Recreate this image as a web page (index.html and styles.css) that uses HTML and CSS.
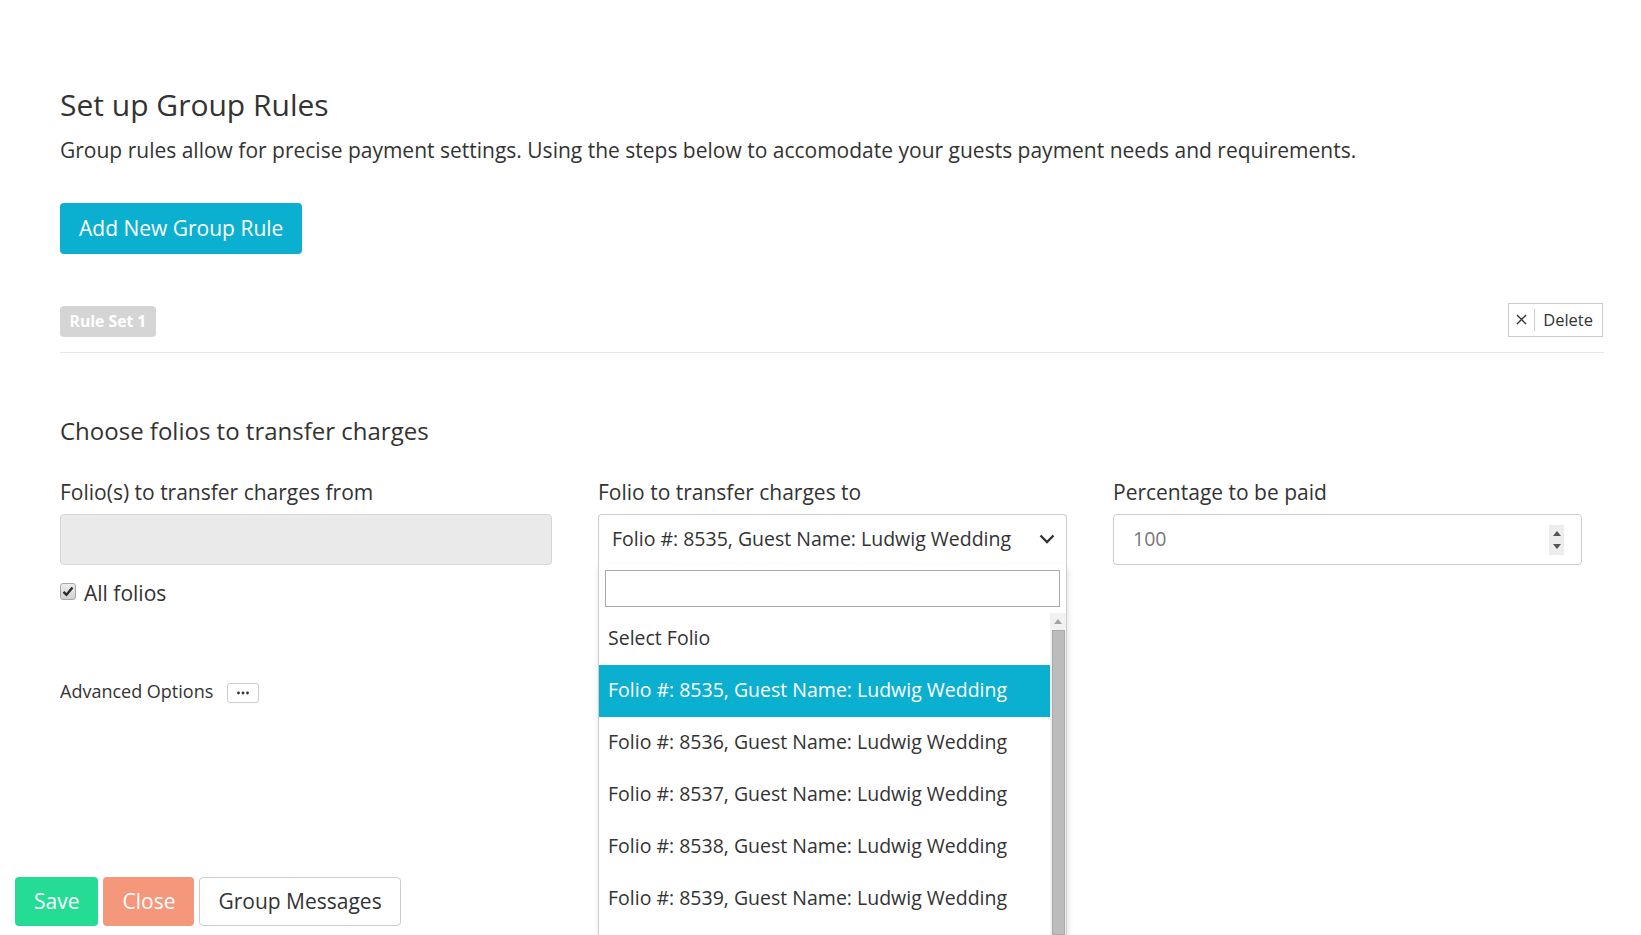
FILE: index.html
```html
<!DOCTYPE html>
<html lang="en">
<head>
<meta charset="utf-8">
<title>Set up Group Rules</title>
<link rel="stylesheet" href="styles.css">
</head>
<body>
<div class="page">
  <main class="content">
    <h1 class="title">Set up Group Rules</h1>
    <p class="intro">Group rules allow for precise payment settings. Using the steps below to accomodate your guests payment needs and requirements.</p>
    <div class="add-row"><button class="btn btn-add">Add New Group Rule</button></div>

    <div class="rule-head">
      <span class="badge">Rule Set 1</span>
      <button class="delete">
        <span class="del-x"><svg width="11" height="11" viewBox="0 0 11 11"><path d="M1 1L10 10M10 1L1 10" stroke="#333" stroke-width="1.4" fill="none"/></svg></span>
        <span class="del-sep"></span>
        <span class="del-label">Delete</span>
      </button>
    </div>

    <h2 class="section">Choose folios to transfer charges</h2>

    <div class="grid">
      <div class="col">
        <label class="label">Folio(s) to transfer charges from</label>
        <div class="field field-disabled"></div>
        <div class="check-row">
          <span class="checkbox"><svg width="12" height="11" viewBox="0 0 12 11"><path d="M1.5 5.8L4.5 8.8L10.5 1.5" stroke="#2b2b2b" stroke-width="2.4" fill="none"/></svg></span>
          <span>All folios</span>
        </div>
        <div class="adv">
          <span>Advanced Options</span>
          <button class="dots"><svg width="14" height="4" viewBox="0 0 14 4"><circle cx="2.5" cy="2" r="1.4" fill="#333"/><circle cx="7" cy="2" r="1.4" fill="#333"/><circle cx="11.5" cy="2" r="1.4" fill="#333"/></svg></button>
        </div>
      </div>

      <div class="col">
        <label class="label">Folio to transfer charges to</label>
        <div class="select-wrap">
          <div class="select">
            <span>Folio #: 8535, Guest Name: Ludwig Wedding</span>
            <svg class="chev" width="16" height="10" viewBox="0 0 16 10"><path d="M1.5 1.5L8 8L14.5 1.5" stroke="#333" stroke-width="2.4" fill="none"/></svg>
          </div>
          <div class="dropdown">
            <div class="search"></div>
            <div class="list">
              <div class="items">
                <div class="item">Select Folio</div>
                <div class="item active">Folio #: 8535, Guest Name: Ludwig Wedding</div>
                <div class="item">Folio #: 8536, Guest Name: Ludwig Wedding</div>
                <div class="item">Folio #: 8537, Guest Name: Ludwig Wedding</div>
                <div class="item">Folio #: 8538, Guest Name: Ludwig Wedding</div>
                <div class="item">Folio #: 8539, Guest Name: Ludwig Wedding</div>
              </div>
              <div class="scrollbar">
                <div class="sb-up"><svg width="8" height="5" viewBox="0 0 8 5"><path d="M0 5L4 0L8 5Z" fill="#a3a3a3"/></svg></div>
                <div class="sb-thumb"></div>
              </div>
            </div>
          </div>
        </div>
      </div>

      <div class="col">
        <label class="label">Percentage to be paid</label>
        <div class="field field-number">
          <span class="num">100</span>
          <span class="spin">
            <svg width="8" height="5" viewBox="0 0 8 5"><path d="M0 5L4 0L8 5Z" fill="#555"/></svg>
            <svg width="8" height="5" viewBox="0 0 8 5"><path d="M0 0L8 0L4 5Z" fill="#555"/></svg>
          </span>
        </div>
      </div>
    </div>
  </main>

  <footer class="actions">
    <button class="btn btn-save">Save</button>
    <button class="btn btn-close">Close</button>
    <button class="btn btn-default">Group Messages</button>
  </footer>
</div>
</body>
</html>
```

FILE: styles.css
```css
html, body {
  margin: 0;
  height: 100%;
  overflow: hidden;
}

body {
  font-family: "Open Sans", "Liberation Sans", sans-serif;
  color: #333;
  background: #fff;
}

.page {
  display: flex;
  flex-direction: column;
  min-height: 100vh;
}

.content {
  padding: 88px 37px 0 60px;
}

.title {
  margin: 0;
  font-size: 30px;
  font-weight: 400;
  line-height: 33px;
}

.intro {
  margin: 14px 0 0;
  font-size: 21px;
  line-height: 30px;
}

.btn {
  font-family: inherit;
  font-size: 21px;
  border: 1px solid transparent;
  border-radius: 4px;
  padding: 0 18px 1px;
  height: 51px;
  display: inline-flex;
  align-items: center;
  justify-content: center;
  cursor: pointer;
  box-sizing: border-box;
}

.add-row {
  margin-top: 38px;
  display: flex;
}

.btn-add {
  background: #0bafd0;
  color: #fff;
}

.rule-head {
  margin-top: 49px;
  display: flex;
  justify-content: space-between;
  align-items: flex-end;
  padding-bottom: 15px;
  border-bottom: 1px solid #e6e6e6;
}

.badge {
  background: #d5d5d5;
  color: #fff;
  font-weight: 700;
  font-size: 15.75px;
  height: 31px;
  line-height: 30px;
  padding: 0 9.5px;
  border-radius: 4px;
}

.delete {
  display: flex;
  align-items: center;
  height: 34px;
  box-sizing: border-box;
  border: 1px solid #ccc;
  background: #fff;
  padding: 0 0 2px;
  font-family: inherit;
  font-size: 16.5px;
  color: #333;
  margin-right: 1px;
}

.del-x {
  width: 25px;
  display: flex;
  justify-content: center;
  margin-top: 1px;
}

.del-sep {
  width: 1px;
  height: 22px;
  background: #ccc;
  margin-top: 2px;
}

.del-label {
  padding: 0 9px 0 8px;
}

.section {
  margin: 64px 0 0;
  font-size: 24px;
  font-weight: 400;
  line-height: 27px;
}

.grid {
  display: grid;
  grid-template-columns: 492px 469px 469px;
  column-gap: 46px;
  margin-top: 33px;
}

.label {
  display: block;
  font-size: 21px;
  line-height: 30px;
  margin-bottom: 7px;
}

.field {
  height: 51px;
  box-sizing: border-box;
  border: 1px solid #ccc;
  border-radius: 4px;
}

.field-disabled {
  background: #eaeaea;
  border-color: #d6d6d6;
}

.check-row {
  margin-top: 13px;
  display: flex;
  align-items: center;
  gap: 8px;
  font-size: 21px;
  line-height: 30px;
}

.checkbox {
  width: 16px;
  height: 17px;
  box-sizing: border-box;
  border: 1px solid #a8a8a8;
  border-radius: 3px;
  background: linear-gradient(#ececec, #d2d2d2);
  display: flex;
  align-items: center;
  justify-content: center;
  margin-top: -3px;
}

.adv {
  margin-top: 70px;
  display: flex;
  align-items: center;
  gap: 14px;
  font-size: 18px;
  line-height: 27px;
}

.dots {
  width: 32px;
  height: 20px;
  box-sizing: border-box;
  border: 1px solid #ccc;
  border-radius: 3px;
  background: #fff;
  padding: 0;
  display: flex;
  align-items: center;
  justify-content: center;
  margin-top: 2px;
}

.select-wrap {
  position: relative;
}

.select {
  height: 50px;
  box-sizing: border-box;
  border: 1px solid #ccc;
  border-bottom: none;
  border-radius: 4px 4px 0 0;
  display: flex;
  align-items: center;
  justify-content: space-between;
  padding: 0 11px 3px 13px;
  font-size: 19.5px;
}

.chev {
  margin-top: 2px;
}

.dropdown {
  position: absolute;
  top: 100%;
  left: 0;
  right: 0;
  background: #fff;
  border: 1px solid #ccc;
  border-top: none;
  box-shadow: 1px 4px 6px rgba(0, 0, 0, 0.12);
  padding-top: 6px;
  z-index: 5;
}

.search {
  margin: 0 6px 6px;
  height: 37px;
  box-sizing: border-box;
  border: 1px solid #aaa;
}

.list {
  display: flex;
  height: 322px;
  overflow: hidden;
}

.items {
  flex: 1;
}

.item {
  height: 52px;
  box-sizing: border-box;
  display: flex;
  align-items: center;
  padding: 0 0 3px 9px;
  font-size: 19.5px;
  white-space: nowrap;
}

.item.active {
  background: #0bafd0;
  color: #fff;
}

.scrollbar {
  width: 16px;
  background: #f1f1f1;
  display: flex;
  flex-direction: column;
}

.sb-up {
  height: 17px;
  display: flex;
  align-items: center;
  justify-content: center;
}

.sb-thumb {
  flex: 1;
  margin: 0 1px 0 2px;
  background: #bcbcbc;
  border: 1px solid #a9a9a9;
}

.field-number {
  display: flex;
  align-items: center;
  justify-content: space-between;
  padding: 0 17px 2px 19px;
}

.num {
  font-size: 19.5px;
  color: #777;
}

.spin {
  width: 15px;
  height: 30px;
  background: #ededed;
  display: flex;
  flex-direction: column;
  align-items: center;
  justify-content: center;
  gap: 8px;
  margin-top: 2px;
}

.actions {
  margin-top: auto;
  padding: 0 0 9px 15px;
  display: flex;
  gap: 5px;
}

.actions .btn {
  height: 49px;
  padding-bottom: 2px;
}

.btn-save {
  background: #25dc94;
  color: #fff;
}

.btn-close {
  background: #f5977a;
  color: #fff;
}

.btn-default {
  background: #fff;
  color: #333;
  border-color: #ccc;
}
```
